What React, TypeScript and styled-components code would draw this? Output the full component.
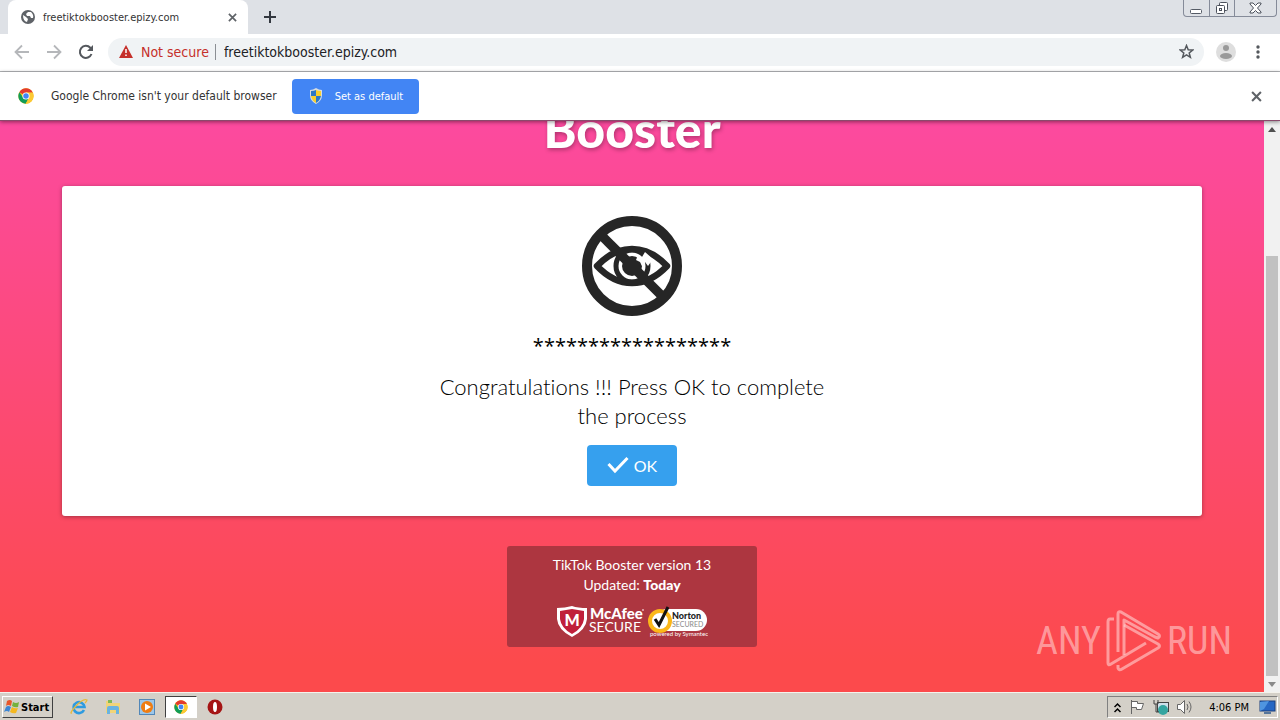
import React from "react";
import styled, { createGlobalStyle } from "styled-components";

const ui = `"DejaVu Sans Condensed", "DejaVu Sans", sans-serif`;
const web = `Lato, "Open Sans", sans-serif`;

const GlobalStyle = createGlobalStyle`
  * { box-sizing: border-box; }
  body { margin: 0; overflow: hidden; }
  button { font: inherit; color: inherit; background: none; border: 0; padding: 0; margin: 0; }
  h1, p { margin: 0; }
  svg { display: block; flex: none; }
`;

const Desktop = styled.div`
  display: flex;
  flex-direction: column;
  height: 100vh;
  font-family: ${ui};
  color: #333;
`;

const TabStrip = styled.header`
  display: flex;
  flex: none;
  height: 34px;
  padding-left: 8px;
  background: #dee1e6;
`;

const Tab = styled.div`
  display: flex;
  align-items: center;
  width: 240px;
  padding: 0 8px 0 13px;
  border-radius: 8px 8px 0 0;
  background: #fff;
  font-size: 11px;
  gap: 8px;
`;

const TabTitle = styled.span`
  flex: 1;
  white-space: nowrap;
`;

const IconButton = styled.button<{ $size?: number }>`
  display: flex;
  flex: none;
  align-items: center;
  justify-content: center;
  width: ${(p) => p.$size ?? 32}px;
  height: ${(p) => p.$size ?? 32}px;
`;

const NewTab = styled(IconButton)`
  height: 34px;
  margin-left: 6px;
`;

const WindowControls = styled.div`
  display: flex;
  height: 17px;
  margin: 0 3px 0 auto;
  border: 1px solid #858b99;
  border-top: 0;
  border-radius: 0 0 4px 4px;
`;

const WindowButton = styled.button<{ $wide?: boolean }>`
  display: flex;
  align-items: center;
  justify-content: center;
  width: ${(p) => (p.$wide ? 42 : 25)}px;
  & + & { border-left: 1px solid #858b99; }
`;

const Toolbar = styled.nav`
  display: flex;
  flex: none;
  align-items: center;
  height: 38px;
  padding: 0 6px 2px;
  background: #fff;
  border-bottom: 1px solid #b4b6b9;
`;

const Omnibox = styled.div`
  display: flex;
  flex: 1;
  align-items: center;
  height: 28px;
  margin: 0 6px;
  padding: 0 2px 0 11px;
  border-radius: 14px;
  background: #f0f3f5;
  font-size: 14px;
`;

const Security = styled.button`
  display: flex;
  align-items: center;
  gap: 8px;
  padding-right: 6px;
  border-right: 1px solid #8b8f94;
  color: #c5302b;
  line-height: 16px;
  white-space: nowrap;
`;

const Address = styled.input`
  flex: 1;
  min-width: 0;
  padding: 0 8px;
  border: 0;
  outline: 0;
  background: none;
  color: #202124;
  font: inherit;
`;

const InfoBar = styled.div`
  display: flex;
  position: relative;
  z-index: 1;
  flex: none;
  align-items: center;
  height: 49px;
  padding: 0 12px 0 18px;
  background: #fff;
  border-bottom: 1px solid #8a4a6c;
  box-shadow: 0 1px 4px rgba(0, 0, 0, 0.45);
  font-size: 12px;
`;

const InfoText = styled.span`
  margin: 0 15px 0 17px;
`;

const DefaultButton = styled.button`
  display: flex;
  align-items: center;
  height: 35px;
  padding: 0 16px;
  gap: 11px;
  border-radius: 4px;
  background: #4285f4;
  color: #fff;
  font-size: 11px;
`;

const Push = styled.span`
  margin-left: auto;
`;

const Viewport = styled.div`
  display: flex;
  position: relative;
  flex: 1;
  min-height: 0;
`;

const Page = styled.main`
  display: flex;
  flex: 1;
  flex-direction: column;
  align-items: center;
  justify-content: flex-end;
  overflow: hidden;
  padding: 0 62px 45px;
  background: linear-gradient(#fc4a9f, #fc4a4c 95%);
  font-family: ${web};
  font-variant-ligatures: none;
`;

const Title = styled.h1`
  margin-bottom: 27px;
  color: #fff;
  font-size: 50px;
  font-weight: 900;
  line-height: 60px;
  text-shadow: 1px 2px 4px rgba(0, 0, 0, 0.3);
`;

const Card = styled.section`
  display: flex;
  flex-direction: column;
  align-items: center;
  width: 100%;
  max-width: 1140px;
  padding: 30px;
  border-radius: 3px;
  background: #fff;
  box-shadow: 0 1px 4px rgba(0, 0, 0, 0.35);
  color: #000;
`;

const Stars = styled.p`
  margin: 15px 0 12px;
  font-family: "Open Sans", sans-serif;
  font-size: 20px;
  line-height: 29px;
`;

const Message = styled.p`
  max-width: 400px;
  margin-bottom: 15px;
  font-size: 22px;
  font-weight: 300;
  line-height: 29px;
  text-align: center;
`;

const OkButton = styled.button`
  display: flex;
  align-items: center;
  height: 41px;
  padding: 0 20px;
  gap: 5px;
  border-radius: 4px;
  background: #36a0ee;
  color: #fff;
  font-size: 16px;
`;

const VersionBox = styled.footer`
  width: 250px;
  margin-top: 30px;
  padding: 9px 10px 9px;
  border-radius: 3px;
  background: #ad3640;
  color: #fff;
  font-size: 14px;
  line-height: 20px;
  text-align: center;

  b { font-weight: 900; }
`;

const Seals = styled.div`
  display: flex;
  align-items: center;
  justify-content: center;
  margin-top: 9px;
  gap: 4px;
`;

const ScrollBar = styled.div`
  display: flex;
  flex: none;
  flex-direction: column;
  width: 16px;
  background: #f1f1f1;
`;

const ScrollTrack = styled.div`
  display: flex;
  flex: 1;
  flex-direction: column;
  justify-content: flex-end;
  padding: 0 2px;
`;

const ScrollThumb = styled.div`
  height: 78%;
  background: #c1c1c1;
`;

const Watermark = styled.div`
  display: flex;
  position: absolute;
  right: 48px;
  bottom: 19px;
  align-items: center;
  gap: 5px;
  color: rgba(255, 205, 205, 0.62);
  font-family: "Roboto Condensed", Roboto, sans-serif;
  font-size: 38px;
  line-height: 64px;
`;

const TaskBar = styled.footer`
  display: flex;
  flex: none;
  align-items: center;
  height: 28px;
  padding: 1px 2px 0;
  border-top: 1px solid #f4f2ec;
  background: #d4d0c8;
  color: #000;
`;

const StartButton = styled.button`
  display: flex;
  align-items: center;
  height: 22px;
  padding: 0 3px 0 1px;
  gap: 1px;
  border: 1px solid;
  border-color: #fff #404040 #404040 #fff;
  font-size: 11px;
  font-weight: 700;
`;

const Launchers = styled.div`
  display: flex;
  margin-left: 10px;
  gap: 2px;
`;

const Launcher = styled.button<{ $active?: boolean }>`
  display: flex;
  align-items: center;
  justify-content: center;
  width: 32px;
  height: 22px;
  border: 1px solid;
  border-color: ${(p) => (p.$active ? "#404040 #fff #fff #404040" : "transparent")};
  background: ${(p) => (p.$active ? "#fff" : "none")};
`;

const Tray = styled.div`
  display: flex;
  align-items: center;
  height: 22px;
  margin-left: auto;
  padding: 0 1px 0 6px;
  gap: 8px;
  border: 1px solid;
  border-color: #808080 #fff #fff #808080;
  font-size: 11px;
`;

const Clock = styled.time`
  margin: 0 2px 0 8px;
  white-space: nowrap;
`;

const Cross = ({ size = 10, color = "#5f6368" }: { size?: number; color?: string }) => (
  <svg width={size} height={size} viewBox="0 0 10 10" stroke={color} strokeWidth="1.9">
    <path d="M1 1L9 9M9 1L1 9" />
  </svg>
);

const Arrow = ({ forward }: { forward?: boolean }) => (
  <svg width="16" height="16" viewBox="0 0 16 16" fill="none" stroke="#b5b7ba" strokeWidth="1.8">
    {forward ? <path d="M1 8H14M8 1.5L14.5 8L8 14.5" /> : <path d="M15 8H2M8 1.5L1.5 8L8 14.5" />}
  </svg>
);

const ChromeLogo = ({ size = 16 }: { size?: number }) => (
  <svg width={size} height={size} viewBox="0 0 48 48">
    <circle cx="24" cy="24" r="23" fill="#fbc116" />
    <path d="M24 24L4.1 12.5A23 23 0 0 1 43.9 12.5L44 14H24Z" fill="#e33b2e" />
    <path d="M4.1 12.5A23 23 0 0 0 23 47L33 29L24 24L15 28Z" fill="#109d58" />
    <path d="M44 13.5H24V24L33 29L23 47A23 23 0 0 0 44 13.5Z" fill="#fcc934" />
    <circle cx="24" cy="24" r="10.7" fill="#fff" />
    <circle cx="24" cy="24" r="8.3" fill="#4285f4" />
  </svg>
);

const HiddenEye = () => (
  <svg width="100" height="100" viewBox="0 0 100 100" fill="none" stroke="#262626">
    <circle cx="50" cy="50" r="45" strokeWidth="10" />
    <path d="M15 50Q31 33 50 33T85 50Q69 67 50 67T15 50Z" strokeWidth="6.5" strokeLinejoin="round" />
    <circle cx="50" cy="50" r="16" strokeWidth="5" />
    <circle cx="50" cy="50" r="10" fill="#262626" stroke="none" />
    <path d="M54 44L56 39L60 41L63 36L71 43L66 50L63 46L60 50L58 46Z" fill="#fff" stroke="none" />
    <path d="M17 17L83 83" strokeWidth="9.5" />
  </svg>
);

const McAfeeSeal = () => (
  <svg width="88" height="34" viewBox="0 0 88 34">
    <path d="M1 4Q9 4 16 2Q22 4 31 4V15Q30 26 16 33Q2 26 1 15Z" fill="#fff" />
    <path d="M4 7Q10 6 16 5Q22 6 28 7V15Q27 24 16 30Q5 24 4 15Z" fill="#c01f3a" />
    <g fill="#fff" fontFamily={web}>
      <text x="16" y="22" fontSize="16" fontWeight="900" textAnchor="middle">M</text>
      <text x="34" y="15" fontSize="15" fontWeight="900">McAfee</text>
      <text x="33" y="28" fontSize="14">SECURE</text>
    </g>
    <circle cx="87" cy="6" r="1" fill="#e9b6bb" />
  </svg>
);

const NortonSeal = () => (
  <svg width="60" height="34" viewBox="0 0 60 34">
    <rect x="8" y="5" width="51" height="22" rx="11" fill="#fff" />
    <circle cx="12" cy="17" r="10" fill="#fff" stroke="#fbb718" strokeWidth="4" />
    <path d="M7 15L11 21L20 3" fill="none" stroke="#111" strokeWidth="3" />
    <text x="24" y="15" fontFamily={web} fontSize="9" fontWeight="900" fill="#222">Norton</text>
    <text x="24" y="23" fontFamily={web} fontSize="7" fill="#888">SECURED</text>
    <text x="2" y="32" fontFamily={web} fontSize="6" fill="#fff">powered by Symantec</text>
  </svg>
);

export default function App() {
  return (
    <Desktop>
      <GlobalStyle />
      <TabStrip>
        <Tab>
          <svg width="14" height="14" viewBox="0 0 14 14">
            <circle cx="7" cy="7" r="7" fill="#5f6368" />
            <path d="M2 5L5 7L7 9L6 12Q2 11 2 5ZM7 2L10 2Q13 5 12 8L10 8L9 6L6 6L5 4Z" fill="#fff" />
          </svg>
          <TabTitle>freetiktokbooster.epizy.com</TabTitle>
          <IconButton $size={16} aria-label="Close tab"><Cross size={9} /></IconButton>
        </Tab>
        <NewTab aria-label="New tab">
          <svg width="12" height="12" stroke="#333840" strokeWidth="2"><path d="M6 0V12M0 6H12" /></svg>
        </NewTab>
        <WindowControls>
          <WindowButton aria-label="Minimize">
            <svg width="13" height="12" fill="#fff" stroke="#555b66"><rect x=".5" y="7.500" width="11" height="4" rx="1" /></svg>
          </WindowButton>
          <WindowButton aria-label="Restore">
            <svg width="14" height="14" fill="#fff" stroke="#4b505b"><rect x="4.500" y="1.500" width="8" height="8" rx="1" /><rect x="1.500" y="4.500" width="8" height="8" rx="1" /><rect x="4.500" y="7.500" width="2" height="2" /></svg>
          </WindowButton>
          <WindowButton $wide aria-label="Close">
            <svg width="13" height="12" viewBox="0 0 13 12" fill="#fff" stroke="#4b505b"><path d="M1 1H4L6.500 3.500L9 1H12V2L8.500 6L12 10V11H9L6.500 8.500L4 11H1V10L4.500 6L1 2Z" /></svg>
          </WindowButton>
        </WindowControls>
      </TabStrip>
      <Toolbar>
        <IconButton aria-label="Back"><Arrow /></IconButton>
        <IconButton aria-label="Forward"><Arrow forward /></IconButton>
        <IconButton aria-label="Reload">
          <svg width="16" height="16" viewBox="0 0 16 16" fill="none" stroke="#54585d" strokeWidth="2"><path d="M13.500 10A6 6 0 1 1 12.300 3.800L14 5.500" /><path d="M15 1V7H9Z" fill="#54585d" stroke="none" /></svg>
        </IconButton>
        <Omnibox>
          <Security>
            <svg width="14" height="13" viewBox="0 0 14 13"><path d="M7 0L14 13H0Z" fill="#c5302b" /><path d="M7 4V8M7 9.500V11" stroke="#fff" strokeWidth="1.500" /></svg>
            Not secure
          </Security>
          <Address aria-label="Address" defaultValue="freetiktokbooster.epizy.com" />
          <IconButton aria-label="Bookmark this page">
            <svg width="15" height="15" viewBox="0 0 15 15" fill="none" stroke="#54585d" strokeWidth="1.500"><path d="M7.500 1.500L9.200 5.700L13.700 6L10.200 8.900L11.400 13.300L7.500 10.900L3.600 13.300L4.800 8.900L1.300 6L5.800 5.700Z" /></svg>
          </IconButton>
        </Omnibox>
        <IconButton aria-label="Profile">
          <svg width="20" height="20"><circle cx="10" cy="10" r="10" fill="#dedede" /><circle cx="10" cy="6" r="3" fill="#999" /><ellipse cx="10" cy="14" rx="6" ry="3" fill="#999" /></svg>
        </IconButton>
        <IconButton aria-label="Menu">
          <svg width="4" height="14" fill="#54585d"><circle cx="2" cy="2" r="1.700" /><circle cx="2" cy="7" r="1.700" /><circle cx="2" cy="12" r="1.700" /></svg>
        </IconButton>
      </Toolbar>
      <InfoBar>
        <ChromeLogo />
        <InfoText>Google Chrome isn't your default browser</InfoText>
        <DefaultButton>
          <svg width="16" height="16" viewBox="0 0 16 16">
            <path d="M8 0Q11 2 14 2V7Q14 13 8 16Q2 13 2 7V2Q5 2 8 0Z" fill="#d7dde0" />
            <path d="M8 2V8H3V3Q6 3 8 2Z" fill="#2b78c8" /><path d="M8 2Q10 3 13 3V8H8Z" fill="#f7cf2e" />
            <path d="M3 8H8V15Q4 13 3 8Z" fill="#f7cf2e" /><path d="M8 8H13Q12 13 8 15Z" fill="#2b78c8" />
          </svg>
          Set as default
        </DefaultButton>
        <Push><IconButton $size={24} aria-label="Dismiss"><Cross size={11} /></IconButton></Push>
      </InfoBar>
      <Viewport>
        <Page>
          <Title>Booster</Title>
          <Card>
            <HiddenEye />
            <Stars>******************</Stars>
            <Message>Congratulations !!! Press OK to complete the process</Message>
            <OkButton>
              <svg width="22" height="20" viewBox="0 0 22 20" fill="none" stroke="#fff" strokeWidth="3"><path d="M1.500 8L8 15L20.500 2" /></svg>
              OK
            </OkButton>
          </Card>
          <VersionBox>
            <p>TikTok Booster version 13</p>
            <p>Updated: <b>Today</b></p>
            <Seals><McAfeeSeal /><NortonSeal /></Seals>
          </VersionBox>
        </Page>
        <ScrollBar>
          <IconButton $size={16} aria-label="Scroll up"><svg width="8" height="5"><path d="M0 5L4 0L8 5Z" fill="#505050" /></svg></IconButton>
          <ScrollTrack><ScrollThumb /></ScrollTrack>
          <IconButton $size={16} aria-label="Scroll down"><svg width="8" height="5"><path d="M0 0H8L4 5Z" fill="#8a8a8a" /></svg></IconButton>
        </ScrollBar>
        <Watermark>
          <span>ANY</span>
          <svg width="56" height="64" viewBox="0 0 56 64" fill="none" stroke="rgba(255,205,205,.62)" strokeWidth="3" strokeLinejoin="round">
            <path d="M8 10H4Q2 10 2 13V54Q2 57 5 55L40 34" />
            <path d="M12 43V5Q12 2 15 3L52 25Q55 27 52 29L49 28L18 11V46" />
            <path d="M12 56V59Q13 62 16 60L52 39Q55 37 52 35L18 16" />
          </svg>
          <span>RUN</span>
        </Watermark>
      </Viewport>
      <TaskBar>
        <StartButton>
          <svg width="16" height="16" viewBox="0 0 16 16"><path d="M3 2Q6 0 8 2L7 7Q4 5 2 7Z" fill="#e8572a" /><path d="M9 3Q12 5 15 3L14 8Q11 9 8 7Z" fill="#74b13c" /><path d="M2 8Q4 6 7 8L5 13Q3 11 0 13Z" fill="#3c86d4" /><path d="M8 8Q11 10 14 9L12 14Q9 15 6 13Z" fill="#f4b820" /></svg>
          Start
        </StartButton>
        <Launchers>
          <Launcher aria-label="Internet Explorer">
            <svg width="18" height="18" viewBox="0 0 18 18" fill="none"><path d="M14 12A5.500 5.500 0 1 1 14.500 9H5" stroke="#2e9be0" strokeWidth="2.600" /><path d="M2 15Q-1 16 5 9Q13 0 17 2Q17 3 15 5" stroke="#e7b93a" strokeWidth="1.300" /></svg>
          </Launcher>
          <Launcher aria-label="File Explorer">
            <svg width="18" height="18" viewBox="0 0 18 18"><path d="M2 3H7L8 5H16V15H2Z" fill="#f1d477" /><path d="M4 2H8V5H4Z" fill="#7eb854" /><path d="M3 16V10Q3 8 5 8H13Q15 8 15 10V16H12V12H6V16Z" fill="#69b3e0" /></svg>
          </Launcher>
          <Launcher aria-label="Media Player">
            <svg width="16" height="16"><rect x=".5" y=".5" width="15" height="15" fill="#9cc7ea" stroke="#5287b8" /><circle cx="8" cy="8" r="6" fill="#ef7d13" /><path d="M6 4.500L12 8L6 11.500Z" fill="#fff" /></svg>
          </Launcher>
          <Launcher $active aria-label="Google Chrome"><ChromeLogo size={14} /></Launcher>
          <Launcher aria-label="Opera">
            <svg width="16" height="16"><circle cx="8" cy="8" r="7.500" fill="#a51414" /><ellipse cx="8" cy="8" rx="2" ry="5" fill="#fff" /></svg>
          </Launcher>
        </Launchers>
        <Tray>
          <svg width="7" height="11" fill="none" stroke="#000" strokeWidth="1.500"><path d="M.5 5L3.500 2L6.500 5M.5 10L3.500 7L6.500 10" /></svg>
          <svg width="16" height="16" fill="#fff" stroke="#666"><path d="M2.500 1V15M2.500 2.500H8.500V4.500H14.500L12.500 10.500H7.500V8.500H2.500Z" /></svg>
          <svg width="16" height="16"><rect x="4.500" y="3.500" width="11" height="9" fill="#cfe0ea" stroke="#444" /><circle cx="10" cy="11" r="5" fill="#35a5a0" /><path d="M1 1V5H5V1M3 5V13H6" fill="none" stroke="#444" /></svg>
          <svg width="16" height="16" fill="#fff" stroke="#666"><path d="M.5 5.500H3.500L7.500 1.500V14.500L3.500 10.500H.5Z" /><path d="M10 5Q12 8 10 11M12 2.500Q16 8 12 13.500" fill="none" /></svg>
          <Clock>4:06 PM</Clock>
          <svg width="17" height="16"><rect x="1" y="2" width="15" height="10" fill="#2667c4" stroke="#1a3f7c" /><path d="M1 3L10 2L5 10L1 12Z" fill="#4f95e0" /><path d="M5 14H12" stroke="#57769b" strokeWidth="2" /></svg>
        </Tray>
      </TaskBar>
    </Desktop>
  );
}
